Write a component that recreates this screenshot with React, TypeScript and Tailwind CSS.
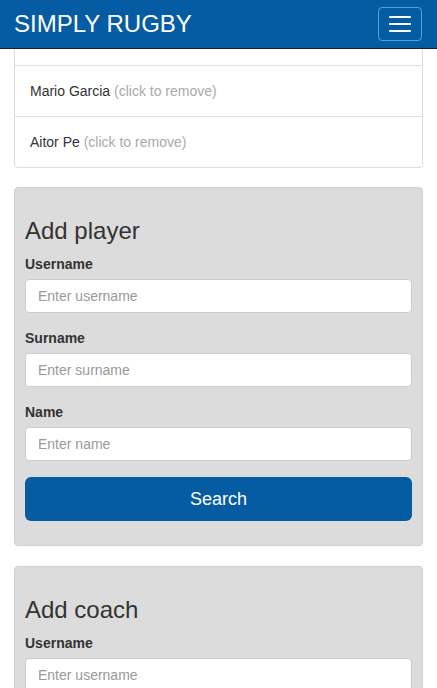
import React from "react";

const font = { fontFamily: '"Liberation Sans", Arial, Helvetica, sans-serif' };

function Field({ label, placeholder }: { label: string; placeholder: string }) {
  return (
    <div className="mb-[15px]">
      <label className="block text-[14px] leading-[20px] font-bold text-[#333] mb-[5px]">{label}</label>
      <input
        className="block w-full h-[34px] px-[12px] text-[14px] bg-white border border-[#ccc] rounded-[4px] placeholder:text-[#999] text-[#555] outline-none"
        placeholder={placeholder}
      />
    </div>
  );
}

function Panel({ title, children }: { title: string; children: React.ReactNode }) {
  return (
    <div className="bg-[#dcdcdc] border border-[#d0d0d0] rounded-[4px] px-[10px] pt-[10px] pb-[10px] mb-[20px]">
      <h3 className="mt-[20px] mb-[10px] text-[24px] leading-[26px] text-[#333] font-normal">{title}</h3>
      {children}
    </div>
  );
}

function Item({ name }: { name: string }) {
  return (
    <div className="-mt-px h-[52px] bg-white border border-[#ddd] px-[15px] flex items-center text-[14px] leading-[20px] text-[#333] last:rounded-b-[4px]">
      <span>
        {name} <span className="text-[#aaa]">(click to remove)</span>
      </span>
    </div>
  );
}

export default function App() {
  return (
    <div className="min-h-screen bg-white" style={font}>
      <div className="h-[49px] bg-[#065ca2] border-b border-[#1c1c1c] flex items-center justify-between pl-[14px] pr-[15px]">
        <span className="text-white text-[24px] leading-[24px] mt-[-1px]">SIMPLY RUGBY</span>
        <button className="w-[44px] h-[34px] mt-[-1px] border border-[#5e9bd0] rounded-[4px] flex flex-col items-center justify-center gap-[5px]">
          <span className="block w-[22px] h-[2px] bg-white rounded-[1px]" />
          <span className="block w-[22px] h-[2px] bg-white rounded-[1px]" />
          <span className="block w-[22px] h-[2px] bg-white rounded-[1px]" />
        </button>
      </div>
      <div className="px-[14px]">
        <div className="mb-[19px]">
          <div className="h-[17px] bg-white border-x border-b border-[#ddd]" />
          <Item name="Mario Garcia" />
          <Item name="Aitor Pe" />
        </div>
        <Panel title="Add player">
          <Field label="Username" placeholder="Enter username" />
          <Field label="Surname" placeholder="Enter surname" />
          <Field label="Name" placeholder="Enter name" />
          <button className="mt-[1px] mb-[14px] w-full h-[44px] bg-[#065ca2] rounded-[6px] text-white text-[18px] leading-[24px]">
            Search
          </button>
        </Panel>
        <Panel title="Add coach">
          <Field label="Username" placeholder="Enter username" />
          <Field label="Surname" placeholder="Enter surname" />
          <Field label="Name" placeholder="Enter name" />
          <button className="mt-[1px] mb-[14px] w-full h-[44px] bg-[#065ca2] rounded-[6px] text-white text-[18px] leading-[24px]">
            Search
          </button>
        </Panel>
      </div>
    </div>
  );
}
